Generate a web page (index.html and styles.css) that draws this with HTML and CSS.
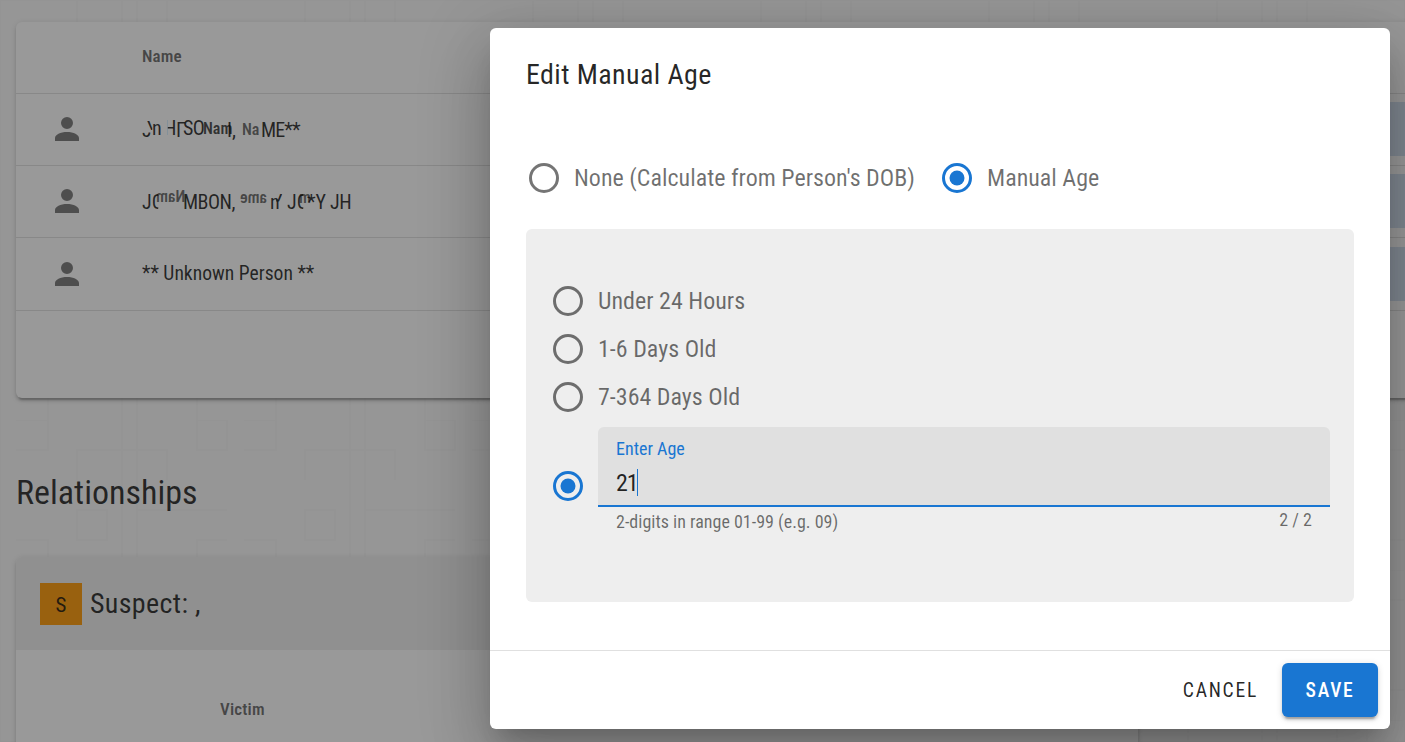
FILE: index.html
```html
<!DOCTYPE html>
<html lang="en">
<head>
<meta charset="utf-8">
<title>Edit Manual Age</title>
<link rel="stylesheet" href="styles.css">
</head>
<body>
<svg width="0" height="0" class="defs">
  <symbol id="account" viewBox="0 0 24 24"><path d="M12,4A4,4 0 0,1 16,8A4,4 0 0,1 12,12A4,4 0 0,1 8,8A4,4 0 0,1 12,4M12,14C16.42,14 20,15.79 20,18V20H4V18C4,15.79 7.58,14 12,14Z"/></symbol>
  <symbol id="radio-off" viewBox="0 0 24 24"><circle cx="12" cy="12" r="9" fill="none" stroke="currentColor" stroke-width="2"/></symbol>
  <symbol id="radio-on" viewBox="0 0 24 24"><circle cx="12" cy="12" r="9" fill="none" stroke="currentColor" stroke-width="2"/><circle cx="12" cy="12" r="5"/></symbol>
</svg>
<main class="page">
  <svg class="backdrop" width="1405" height="742">
    <defs><pattern id="grid" x="16" y="420" width="228" height="150" patternUnits="userSpaceOnUse">
      <path d="M0 0h32v30H0M61 60V30h90v30M106 0v150M121 0v150M181 0v30h30V0zM61 90h30v30H61zM121 90h90M0 120h32v30M181 150v-30h30"/>
    </pattern></defs>
    <rect width="1405" height="742" fill="url(#grid)"/>
  </svg>
  <section class="card people">
    <div class="row head"><span class="cell"><span class="th">Name</span></span></div>
    <div class="row"><svg class="icon"><use href="#account"/></svg>
      <span class="cell"><span class="garble">
        <i class="g1">J</i><i class="g2">Y</i><i class="g3">n</i><i class="g4">H</i><i class="g5">Γ</i><i class="g6">SO</i><b class="g7">Nam</b><i class="g8">I,</i><b class="g9">Na</b><i class="g10">ME**</i>
      </span></span><span class="chip"></span></div>
    <div class="row"><svg class="icon"><use href="#account"/></svg>
      <span class="cell"><span class="garble">
        <i class="h1">JO</i><b class="h2">Nam</b><i class="h3">MBON,</i><b class="h4">ame</b><i class="h6">n</i><i class="h7">Y</i><i class="h8">JO</i><b class="h9">m</b><i class="h10">*Y</i><i class="h11">JH</i>
      </span></span><span class="chip"></span></div>
    <div class="row tall"><svg class="icon"><use href="#account"/></svg>
      <span class="cell"><span class="td">** Unknown Person **</span></span><span class="chip"></span></div>
  </section>
  <h2 class="heading"><span>Relationships</span></h2>
  <section class="card relations">
    <header class="suspect"><span class="badge"><span>S</span></span><span class="suspect-name">Suspect: ,</span></header>
    <div class="victim"><span class="th">Victim</span></div>
  </section>
</main>
<div class="overlay">
  <div class="dialog">
    <h1 class="title"><span>Edit Manual Age</span></h1>
    <div class="modes">
      <label class="radio mode-none"><svg class="icon"><use href="#radio-off"/></svg><span>None (Calculate from Person's DOB)</span></label>
      <label class="radio"><svg class="icon on"><use href="#radio-on"/></svg><span>Manual Age</span></label>
    </div>
    <div class="panel">
      <label class="radio"><svg class="icon"><use href="#radio-off"/></svg><span>Under 24 Hours</span></label>
      <label class="radio"><svg class="icon"><use href="#radio-off"/></svg><span>1-6 Days Old</span></label>
      <label class="radio"><svg class="icon"><use href="#radio-off"/></svg><span>7-364 Days Old</span></label>
      <div class="age">
        <svg class="icon on"><use href="#radio-on"/></svg>
        <div class="field">
          <div class="box"><span class="field-label">Enter Age</span><span class="value"><span>21</span><i class="caret"></i></span></div>
          <div class="hints"><span class="hint">2-digits in range 01-99 (e.g. 09)</span><span class="count">2 / 2</span></div>
        </div>
      </div>
    </div>
    <footer class="actions"><span class="cancel">CANCEL</span><button class="save"><span>SAVE</span></button></footer>
  </div>
</div>
</body>
</html>
```
FILE: styles.css
```css
* { box-sizing: border-box; }
html, body { margin: 0; height: 742px; overflow: hidden; }
body {
  font-family: "Roboto Condensed", Roboto, sans-serif;
  font-stretch: 75%;
  font-weight: 400;
  color: rgba(0, 0, 0, .85);
  background: #fafafa;
  white-space: nowrap;
}
.defs { position: absolute; }
.icon { width: 36px; height: 36px; flex: none; fill: currentColor; color: rgba(0, 0, 0, .54); }
.icon.on { color: #1976d2; }

.page { position: relative; width: 1405px; height: 742px; overflow: hidden; padding: 22px 0 0 16px; }
.backdrop { position: absolute; left: 0; top: 0; fill: none; stroke: #f6f6f6; stroke-width: 2; }
.card {
  position: relative;
  background: #fff;
  border-radius: 6px;
  box-shadow: 0 4.5px 1.5px -3px rgba(0,0,0,.2), 0 3px 3px rgba(0,0,0,.14), 0 1.5px 7.5px rgba(0,0,0,.12);
}
.people { width: 1420px; height: 376px; }
.row { display: flex; align-items: center; height: 72px; padding: 0 0 2px 33px; border-bottom: 1px solid rgba(0,0,0,.12); }
.row.tall { height: 73px; padding-bottom: 0; }
.row.head { padding: 0 0 4px 126px; }
.row .icon { color: rgba(0,0,0,.54); }
.row .icon + .cell { margin-left: 57px; }
.tall .td { position: relative; top: -1px; }
.chip { width: 60px; height: 54px; margin-left: auto; background: #d1e0f1; }
.th { font-size: 17px; font-weight: 600; letter-spacing: .15px; color: rgba(0,0,0,.6); }
.td { font-size: 19.6px; }

/* scrambled name cells: overlapping fragments */
.garble { position: relative; display: block; width: 230px; height: 30px; font-size: 20px; line-height: 30px; }
.garble i, .garble b { position: absolute; top: 1px; font-style: normal; }
.garble b { font-size: 16px; font-weight: 600; color: rgba(0,0,0,.6); }
.garble .g1 { left: 0; clip-path: inset(60% 0 0 0); }
.garble .g2 { left: 5px; top: 0; clip-path: inset(0 50% 45% 0); }
.garble .g3 { left: 10px; top: -1px; }
.garble .g4 { left: 22px; top: -1px; clip-path: inset(0 0 0 30%); }
.garble .g5 { left: 34px; top: 1px; }
.garble .g6 { left: 41px; top: -1px; letter-spacing: -.5px; }
.garble .g7 { left: 61px; top: 0; color: rgba(0,0,0,.75); }
.garble .g8 { left: 85px; }
.garble .g9 { left: 100px; }
.garble .g10 { left: 119px; letter-spacing: -.9px; }
.garble .h1 { left: 0; clip-path: inset(0 25% 0 0); }
.garble .h2 { left: 14px; top: -4px; transform: scaleX(-1); }
.garble .h3 { left: 41px; letter-spacing: -.5px; }
.garble .h4 { left: 98px; top: -3px; transform: scaleX(-1); }
.garble .h6 { left: 128px; }
.garble .h7 { left: 130px; clip-path: inset(0 0 50% 40%); }
.garble .h8 { left: 145px; clip-path: inset(0 25% 0 0); }
.garble .h9 { left: 157px; top: -3px; }
.garble .h10 { left: 165px; }
.garble .h11 { left: 188px; letter-spacing: -.5px; }

.heading { margin: 72px 0 0; height: 45px; line-height: 45px; font-size: 34px; font-weight: 400; position: relative; }
.relations { width: 1122px; height: 260px; margin-top: 42px; }
.suspect { display: flex; align-items: center; height: 93px; padding-left: 24px; background: #eee; border-radius: 6px 6px 0 0; }
.badge { display: flex; align-items: center; justify-content: center; width: 42px; height: 42px; padding-top: 3px; background: #ff9800; font-size: 21px; }
.suspect-name { margin-left: 8px; font-size: 28px; letter-spacing: .0125em; }
.victim { padding: 49px 0 0 204px; }

.overlay { position: absolute; left: 0; top: 0; width: 1405px; height: 742px; overflow: hidden; padding: 28px 0 0 490px; background: rgba(33,33,33,.46); }
.dialog {
  display: flex; flex-direction: column;
  width: 900px; height: 701px; background: #fff; border-radius: 6px;
  box-shadow: 0 16.5px 22.5px -10.5px rgba(0,0,0,.2), 0 36px 57px 4.5px rgba(0,0,0,.14), 0 13.5px 69px 12px rgba(0,0,0,.12);
}
.title { margin: 0; padding: 23px 0 0 36px; height: 125px; line-height: 48px; font-size: 28px; font-weight: 400; letter-spacing: .0145em; }
.modes { display: flex; height: 76px; padding: 7px 0 0 36px; }
.radio { display: flex; align-items: center; height: 36px; font-size: 24px; color: rgba(0,0,0,.56); }
.radio .icon { margin-right: 12px; }
.mode-none { width: 413px; }
.panel { margin-left: 36px; width: 828px; height: 373px; padding: 54px 24px 0; background: #eee; border-radius: 6px; }
.panel .radio { margin-bottom: 12px; }
.age { display: flex; align-items: flex-start; }
.age > .icon { margin: 41px 12px 0 0; }
.field { flex: 1; }
.box { display: flex; flex-direction: column; height: 80px; padding: 8px 18px 0; background: #e0e0e0; border-radius: 6px 6px 0 0; border-bottom: 2px solid #1976d2; }
.field-label { font-size: 18px; line-height: 28px; color: #1976d2; }
.value { display: flex; align-items: center; height: 39px; font-size: 24px; letter-spacing: -1.2px; }
.caret { width: 1px; height: 27px; background: #1976d2; }
.hints { display: flex; justify-content: space-between; padding: 4px 18px 0; font-size: 18px; line-height: 22px; color: rgba(0,0,0,.56); }
.count { margin-top: -2px; }
.actions { display: flex; align-items: center; justify-content: flex-end; height: 79px; margin-top: auto; padding-right: 12px; border-top: 1px solid #e0e0e0; font-size: 19.6px; letter-spacing: .0893em; }
.cancel { margin-right: 24px; padding-top: 1px; }
.save {
  width: 96px; height: 54px; padding: 1px 0 0; border: 0; border-radius: 6px; background: #1976d2; color: #fff;
  font: inherit; font-weight: 500; letter-spacing: inherit;
  box-shadow: 0 4.5px 1.5px -3px rgba(0,0,0,.2), 0 3px 3px rgba(0,0,0,.14), 0 1.5px 7.5px rgba(0,0,0,.12);
}
```
